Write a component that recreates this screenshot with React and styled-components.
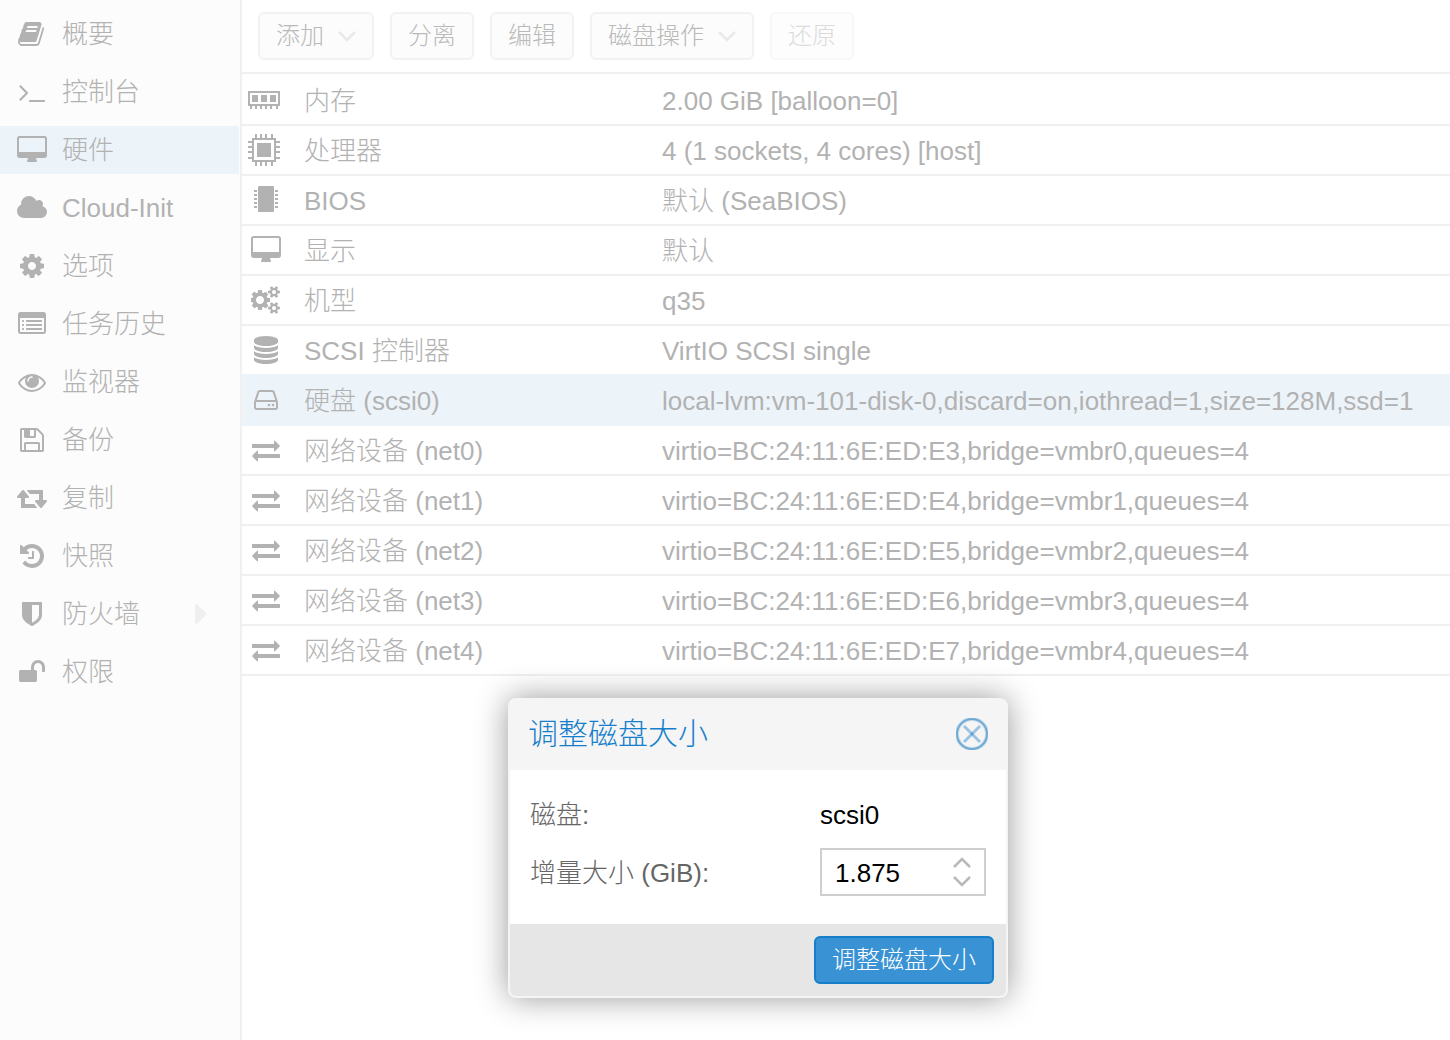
import React, { useState } from 'react';
import styled, { createGlobalStyle } from 'styled-components';

// Font Awesome 4 glyphs, 64 units per pixel at 28px
const glyphs = {
  book: {
    w: 1792,
    d: 'M1639 478q40 57 18 129l-275 906q-19 64-76.5 107.5t-122.5 43.5h-923q-77 0-148.5-53.5t-99.5-131.5q-24-67-2-127 0-4 3-27t4-37q1-8-3-21.5t-3-19.5q2-11 8-21t16.5-23.5 16.5-23.5q23-38 45-91.5t30-91.5q3-10 .5-30t-.5-28q3-11 17-28t17-23q21-36 42-92t25-90q1-9-2.5-32t.5-28q4-13 22-30.5t22-22.5q19-26 42.5-84.5t27.5-96.5q1-8-3-25.5t-2-26.5q2-8 9-18t18-23 17-21q8-12 16.5-30.5t15-35 16-36 19.5-32 26.5-23.5 36-11.5 47.5 5.5l-1 3q38-9 51-9h761q74 0 114 56t18 130l-274 906q-36 119-71.5 153.5t-128.5 34.5h-869q-27 0-38 15-11 16-1 43 24 70 144 70h923q29 0 56-15.5t35-41.5l300-987q7-22 5-57 38 15 59 43zm-1064 2q-4 13 2 22.5t20 9.5h608q13 0 25.5-9.5t16.5-22.5l21-64q4-13-2-22.5t-20-9.5h-608q-13 0-25.5 9.5t-16.5 22.5zm-83 256q-4 13 2 22.5t20 9.5h608q13 0 25.5-9.5t16.5-22.5l21-64q4-13-2-22.5t-20-9.5h-608q-13 0-25.5 9.5t-16.5 22.5z',
  },
  terminal: {
    w: 1792,
    d: 'M649 983l-466 466q-10 10-23 10t-23-10l-50-50q-10-10-10-23t10-23l393-393-393-393q-10-10-10-23t10-23l50-50q10-10 23-10t23 10l466 466q10 10 10 23t-10 23zm1079 457v64q0 14-9 23t-23 9h-960q-14 0-23-9t-9-23v-64q0-14 9-23t23-9h960q14 0 23 9t9 23z',
  },
  desktop: {
    w: 2048,
    d: 'M1856 992v-832q0-13-9.5-22.5t-22.5-9.5h-1600q-13 0-22.5 9.5t-9.5 22.5v832q0 13 9.5 22.5t22.5 9.5h1600q13 0 22.5-9.5t9.5-22.5zm128-832v1088q0 66-47 113t-113 47h-544q0 37 16 77.5t32 71 16 43.5q0 26-19 45t-45 19h-512q-26 0-45-19t-19-45q0-14 16-44t32-70 16-78h-544q-66 0-113-47t-47-113v-1088q0-66 47-113t113-47h1600q66 0 113 47t47 113z',
  },
  cloud: {
    w: 2048,
    d: 'M1984 1152q0 159-112.5 271.5t-271.5 112.5h-1088q-185 0-316.5-131.5t-131.5-316.5q0-132 71-241.5t187-163.5q-2-28-2-43 0-212 150-362t362-150q158 0 286.5 88t187.5 230q70-62 166-62 106 0 181 75t75 181q0 75-41 138 129 30 213 134.5t84 239.5z',
  },
  cog: {
    w: 1792,
    d: 'M1152 896q0-106-75-181t-181-75-181 75-75 181 75 181 181 75 181-75 75-181zm512-109v222q0 12-8 23t-20 13l-185 28q-19 54-39 91 35 50 107 138 10 12 10 25t-9 23q-27 37-99 108t-94 71q-12 0-26-9l-138-108q-44 23-91 38-16 136-29 186-7 28-36 28h-222q-14 0-24.5-8.5t-11.5-21.5l-28-184q-49-16-90-37l-141 107q-10 9-25 9-14 0-25-11-126-114-165-168-7-10-7-23 0-12 8-23 15-21 51-66.5t54-70.5q-27-50-41-99l-183-27q-13-2-21-12.5t-8-23.5v-222q0-12 8-23t19-13l186-28q14-46 39-92-40-57-107-138-10-12-10-24 0-10 9-23 26-36 98.5-107.5t94.5-71.5q13 0 26 10l138 107q44-23 91-38 16-136 29-186 7-28 36-28h222q14 0 24.5 8.5t11.5 21.5l28 184q49 16 90 37l142-107q9-9 24-9 13 0 25 10 129 119 165 170 7 8 7 22 0 12-8 23-15 21-51 66.5t-54 70.5q26 50 41 98l183 28q13 2 21 12.5t8 23.5z',
  },
  list: {
    w: 1792,
    d: 'M384 1184v64q0 13-9.5 22.5t-22.5 9.5h-64q-13 0-22.5-9.5t-9.5-22.5v-64q0-13 9.5-22.5t22.5-9.5h64q13 0 22.5 9.5t9.5 22.5zm0-256v64q0 13-9.5 22.5t-22.5 9.5h-64q-13 0-22.5-9.5t-9.5-22.5v-64q0-13 9.5-22.5t22.5-9.5h64q13 0 22.5 9.5t9.5 22.5zm0-256v64q0 13-9.5 22.5t-22.5 9.5h-64q-13 0-22.5-9.5t-9.5-22.5v-64q0-13 9.5-22.5t22.5-9.5h64q13 0 22.5 9.5t9.5 22.5zm1152 512v64q0 13-9.5 22.5t-22.5 9.5h-960q-13 0-22.5-9.5t-9.5-22.5v-64q0-13 9.5-22.5t22.5-9.5h960q13 0 22.5 9.5t9.5 22.5zm0-256v64q0 13-9.5 22.5t-22.5 9.5h-960q-13 0-22.5-9.5t-9.5-22.5v-64q0-13 9.5-22.5t22.5-9.5h960q13 0 22.5 9.5t9.5 22.5zm0-256v64q0 13-9.5 22.5t-22.5 9.5h-960q-13 0-22.5-9.5t-9.5-22.5v-64q0-13 9.5-22.5t22.5-9.5h960q13 0 22.5 9.5t9.5 22.5zm128 704v-832q0-13-9.5-22.5t-22.5-9.5h-1472q-13 0-22.5 9.5t-9.5 22.5v832q0 13 9.5 22.5t22.5 9.5h1472q13 0 22.5-9.5t9.5-22.5zm128-1088v1088q0 66-47 113t-113 47h-1472q-66 0-113-47t-47-113v-1088q0-66 47-113t113-47h1472q66 0 113 47t47 113z',
  },
  eye: {
    w: 1792,
    d: 'M1664 960q-152-236-381-353 61 104 61 225 0 185-131.5 316.5t-316.5 131.5-316.5-131.5-131.5-316.5q0-121 61-225-229 117-381 353 133 205 333.5 326.5t434.5 121.5 434.5-121.5 333.5-326.5zm-720-384q0-20-14-34t-34-14q-125 0-214.5 89.5t-89.5 214.5q0 20 14 34t34 14 34-14 14-34q0-86 61-147t147-61q20 0 34-14t14-34zm848 384q0 34-20 69-140 230-376.5 368.5t-499.5 138.5-499.5-139-376.5-368q-20-35-20-69t20-69q140-229 376.5-368t499.5-139 499.5 139 376.5 368q20 35 20 69z',
  },
  floppy: {
    w: 1792,
    d: 'M512 1536h768v-384h-768v384zm896 0h128v-896q0-14-10-38.5t-20-34.5l-281-281q-10-10-34-20t-39-10v416q0 40-28 68t-68 28h-576q-40 0-68-28t-28-68v-416h-128v1280h128v-416q0-40 28-68t68-28h832q40 0 68 28t28 68v416zm-384-928v-320q0-13-9.5-22.5t-22.5-9.5h-192q-13 0-22.5 9.5t-9.5 22.5v320q0 13 9.5 22.5t22.5 9.5h192q13 0 22.5-9.5t9.5-22.5zm640 32v928q0 40-28 68t-68 28h-1344q-40 0-68-28t-28-68v-1344q0-40 28-68t68-28h928q40 0 88 20t76 48l280 280q28 28 48 76t20 88z',
  },
  retweet: {
    w: 1920,
    d: 'M1280 1504q0 13-9.5 22.5t-22.5 9.5h-960q-8 0-13.5-2t-9-7-5.5-8-3-11.5-1-11.5v-600h-192q-26 0-45-19t-19-45q0-24 15-41l320-384q19-22 49-22t49 22l320 384q15 17 15 41 0 26-19 45t-45 19h-192v384h576q16 0 25 11l160 192q7 10 7 21zm640-416q0 24-15 41l-320 384q-20 23-49 23t-49-23l-320-384q-15-17-15-41 0-26 19-45t45-19h192v-384h-576q-16 0-25-12l-160-192q-7-9-7-20 0-13 9.5-22.5t22.5-9.5h960q8 0 13.5 2t9 7 5.5 8 3 11.5 1 11.5v600h192q26 0 45 19t19 45z',
  },
  history: {
    w: 1792,
    d: 'M1664 896q0 156-61 298t-164 245-245 164-298 61q-172 0-327-72.5t-264-204.5q-7-10-6.5-22.5t8.5-20.5l137-138q10-9 25-9 16 2 23 12 73 95 179 147t225 52q104 0 198.5-40.5t163.5-109.5 109.5-163.5 40.5-198.5-40.5-198.5-109.5-163.5-163.5-109.5-198.5-40.5q-98 0-188 35.5t-160 101.5l137 138q31 30 14 69-17 40-59 40h-448q-26 0-45-19t-19-45v-448q0-42 40-59 39-17 69 14l130 129q107-101 244.5-156.5t284.5-55.5q156 0 298 61t245 164 164 245 61 298zm-640-288v448q0 14-9 23t-23 9h-320q-14 0-23-9t-9-23v-64q0-14 9-23t23-9h224v-352q0-14 9-23t23-9h64q14 0 23 9t9 23z',
  },
  shield: {
    w: 1792,
    d: 'M1344 960v-640h-448v1137q119-63 213-137 235-184 235-360zm192-768v768q0 86-33.5 170.5t-83 150-118 127.5-126.5 103-121 77.5-89.5 49.5-42.5 20q-12 6-26 6t-26-6q-16-7-42.5-20t-89.5-49.5-121-77.5-126.5-103-118-127.5-83-150-33.5-170.5v-768q0-26 19-45t45-19h1152q26 0 45 19t19 45z',
  },
  unlock: {
    w: 1792,
    d: 'M1728 576v256q0 26-19 45t-45 19h-64q-26 0-45-19t-19-45v-256q0-106-75-181t-181-75-181 75-75 181v192h96q40 0 68 28t28 68v576q0 40-28 68t-68 28h-960q-40 0-68-28t-28-68v-576q0-40 28-68t68-28h672v-192q0-185 131.5-316.5t316.5-131.5 316.5 131.5 131.5 316.5z',
  },
  cogs: {
    w: 1920,
    d: 'M832 896q0-106-75-181t-181-75-181 75-75 181 75 181 181 75 181-75 75-181zm768 512q0-52-38-90t-90-38-90 38-38 90q0 53 37.5 90.5t90.5 37.5 90.5-37.5 37.5-90.5zm0-1024q0-52-38-90t-90-38-90 38-38 90q0 53 37.5 90.5t90.5 37.5 90.5-37.5 37.5-90.5zm-384 421v185q0 10-7 19.5t-16 10.5l-155 24q-11 35-32 76 34 48 90 115 7 11 7 20 0 12-7 19-23 30-82.5 89.5t-78.5 59.5q-11 0-21-7l-115-90q-37 19-77 31-11 108-23 155-7 24-30 24h-186q-11 0-20-7.5t-10-17.5l-23-153q-34-10-75-31l-118 89q-7 7-20 7-11 0-21-8-144-133-144-160 0-9 7-19 10-14 41-53t47-61q-23-44-35-82l-152-24q-10-1-17-9.5t-7-19.5v-185q0-10 7-19.5t16-10.5l155-24q11-35 32-76-34-48-90-115-7-11-7-20 0-12 7-20 22-30 82-89t79-59q11 0 21 7l115 90q34-18 77-32 11-108 23-154 7-24 30-24h186q11 0 20 7.5t10 17.5l23 153q34 10 75 31l118-89q8-7 20-7 11 0 21 8 144 133 144 160 0 8-7 19-12 16-42 54t-45 60q23 48 34 82l152 23q10 2 17 10.5t7 19.5zm640 533v140q0 16-149 31-12 27-30 52 51 113 51 138 0 4-4 7-122 71-124 71-8 0-46-47t-52-68q-20 2-30 2t-30-2q-14 21-52 68t-46 47q-2 0-124-71-4-3-4-7 0-25 51-138-18-25-30-52-149-15-149-31v-140q0-16 149-31 13-29 30-52-51-113-51-138 0-4 4-7 4-2 35-20t59-34 30-16q8 0 46 46.5t52 67.5q20-2 30-2t30 2q51-71 92-112l6-2q4 0 124 70 4 3 4 7 0 25-51 138 17 23 30 52 149 15 149 31zm0-1024v140q0 16-149 31-12 27-30 52 51 113 51 138 0 4-4 7-122 71-124 71-8 0-46-47t-52-68q-20 2-30 2t-30-2q-14 21-52 68t-46 47q-2 0-124-71-4-3-4-7 0-25 51-138-18-25-30-52-149-15-149-31v-140q0-16 149-31 13-29 30-52-51-113-51-138 0-4 4-7 4-2 35-20t59-34 30-16q8 0 46 46.5t52 67.5q20-2 30-2t30 2q51-71 92-112l6-2q4 0 124 70 4 3 4 7 0 25-51 138 17 23 30 52 149 15 149 31z',
  },
  database: {
    w: 1792,
    d: 'M896 768q237 0 443-43t325-127v170q0 69-103 128t-280 93.5-385 34.5-385-34.5-280-93.5-103-128v-170q119 84 325 127t443 43zm0 768q237 0 443-43t325-127v170q0 69-103 128t-280 93.5-385 34.5-385-34.5-280-93.5-103-128v-170q119 84 325 127t443 43zm0-384q237 0 443-43t325-127v170q0 69-103 128t-280 93.5-385 34.5-385-34.5-280-93.5-103-128v-170q119 84 325 127t443 43zm0-1152q208 0 385 34.5t280 93.5 103 128v128q0 69-103 128t-280 93.5-385 34.5-385-34.5-280-93.5-103-128v-128q0-69 103-128t280-93.5 385-34.5z',
  },
  hdd: {
    w: 1792,
    d: 'M1168 1216q0 33-23.5 56.5t-56.5 23.5-56.5-23.5-23.5-56.5 23.5-56.5 56.5-23.5 56.5 23.5 23.5 56.5zm256 0q0 33-23.5 56.5t-56.5 23.5-56.5-23.5-23.5-56.5 23.5-56.5 56.5-23.5 56.5 23.5 23.5 56.5zm112 160v-320q0-13-9.5-22.5t-22.5-9.5h-1216q-13 0-22.5 9.5t-9.5 22.5v320q0 13 9.5 22.5t22.5 9.5h1216q13 0 22.5-9.5t9.5-22.5zm-1230-480h1180l-157-482q-4-13-16-21.5t-26-8.5h-782q-14 0-26 8.5t-16 21.5zm1358 160v320q0 66-47 113t-113 47h-1216q-66 0-113-47t-47-113v-320q0-25 16-75l197-606q17-53 63-86t101-33h782q55 0 101 33t63 86l197 606q16 50 16 75z',
  },
  exchange: {
    w: 1792,
    d: 'M1792 1184v192q0 13-9.5 22.5t-22.5 9.5h-1376v192q0 13-9.5 22.5t-22.5 9.5q-12 0-24-10l-319-320q-9-9-9-22 0-14 9-23l320-320q9-9 23-9 13 0 22.5 9.5t9.5 22.5v192h1376q13 0 22.5 9.5t9.5 22.5zm0-544q0 14-9 23l-320 320q-9 9-23 9-13 0-22.5-9.5t-9.5-22.5v-192h-1376q-13 0-22.5-9.5t-9.5-22.5v-192q0-13 9.5-22.5t22.5-9.5h1376v-192q0-14 9-23t23-9q12 0 24 10l319 319q9 9 9 23z',
  },
};

const menu = [
  { icon: 'book', text: '概要' },
  { icon: 'terminal', text: '控制台' },
  { icon: 'desktop', text: '硬件' },
  { icon: 'cloud', text: 'Cloud-Init' },
  { icon: 'cog', text: '选项' },
  { icon: 'list', text: '任务历史' },
  { icon: 'eye', text: '监视器' },
  { icon: 'floppy', text: '备份' },
  { icon: 'retweet', text: '复制' },
  { icon: 'history', text: '快照' },
  { icon: 'shield', text: '防火墙', sub: true },
  { icon: 'unlock', text: '权限' },
];

const hardware = [
  { icon: 'memory', name: '内存', value: '2.00 GiB [balloon=0]' },
  { icon: 'cpu', name: '处理器', value: '4 (1 sockets, 4 cores) [host]' },
  { icon: 'bios', name: 'BIOS', value: '默认 (SeaBIOS)' },
  { icon: 'desktop', name: '显示', value: '默认' },
  { icon: 'cogs', name: '机型', value: 'q35' },
  { icon: 'database', name: 'SCSI 控制器', value: 'VirtIO SCSI single' },
  {
    icon: 'hdd',
    name: '硬盘 (scsi0)',
    value: 'local-lvm:vm-101-disk-0,discard=on,iothread=1,size=128M,ssd=1',
  },
  ...[0, 1, 2, 3, 4].map((n) => ({
    icon: 'exchange',
    name: `网络设备 (net${n})`,
    value: `virtio=BC:24:11:6E:ED:E${n + 3},bridge=vmbr${n},queues=4`,
  })),
];

function Glyph({ name }) {
  const { w, d } = glyphs[name];
  return (
    <svg width={w / 64} height="28" viewBox={`0 0 ${w} 1792`} aria-hidden="true">
      <path d={d} fill="currentColor" />
    </svg>
  );
}

function MemoryIcon() {
  const teeth = [2, 7, 12, 17, 22, 28];
  return (
    <svg width="36" height="32" viewBox="0 0 36 32" fill="currentColor" aria-hidden="true">
      <path
        fillRule="evenodd"
        d="M0 7h32v15H0zM2 9v11h28V9zM4 11h6v7H4zM13 11h6v7h-6zM22 11h6v7h-6z"
      />
      {teeth.map((t) => (
        <path key={t} d={`M${t} 22h2v3h-2z`} />
      ))}
    </svg>
  );
}

function CpuIcon() {
  const pins = [7, 12, 17, 23];
  return (
    <svg width="36" height="32" viewBox="0 0 36 32" fill="currentColor" aria-hidden="true">
      <path fillRule="evenodd" d="M4 4h24v24H4zM6 6v20h20V6zM9 9h14v14H9z" />
      {pins.map((p) => (
        <path key={p} d={`M${p} 0h2v4h-2zM${p} 28h2v4h-2zM0 ${p}h4v2H0zM28 ${p}h4v2h-4z`} />
      ))}
    </svg>
  );
}

function BiosIcon() {
  const pins = [6, 10, 14, 18, 22];
  return (
    <svg width="36" height="32" viewBox="0 0 36 32" fill="currentColor" aria-hidden="true">
      <rect x="10" y="2" width="16" height="26" rx="1" />
      {pins.map((p) => (
        <path key={p} d={`M6 ${p}h3v2H6zM27 ${p}h3v2h-3z`} />
      ))}
    </svg>
  );
}

const drawn = { memory: MemoryIcon, cpu: CpuIcon, bios: BiosIcon };

function Chevron({ up }) {
  return (
    <svg width="18" height="12" viewBox="0 0 18 12" fill="none" aria-hidden="true">
      <path
        d={up ? 'M1 10l8-8 8 8' : 'M1 2l8 8 8-8'}
        stroke="currentColor"
        strokeWidth="2.5"
      />
    </svg>
  );
}

function ResizeDialog({ onClose }) {
  const [size, setSize] = useState(1.875);

  return (
    <Dialog role="dialog" aria-labelledby="resize-title">
      <DialogHeader>
        <DialogTitle id="resize-title">调整磁盘大小</DialogTitle>
        <CloseButton type="button" aria-label="关闭" onClick={onClose}>
          <svg width="32" height="32" viewBox="0 0 32 32" fill="none" aria-hidden="true">
            <circle cx="16" cy="16" r="15" stroke="#c3dbed" strokeWidth="4" />
            <circle cx="16" cy="16" r="15" stroke="#72a9d0" strokeWidth="2" />
            <path d="M8 8l16 16M24 8L8 24" stroke="#9dc3e2" strokeWidth="3" />
            <path d="M15 15l2 2M17 15l-2 2" stroke="#5d9ed2" strokeWidth="2" />
          </svg>
        </CloseButton>
      </DialogHeader>
      <DialogBody>
        <Field>
          <FieldLabel as="span">磁盘:</FieldLabel>
          <FieldText>scsi0</FieldText>
        </Field>
        <Field>
          <FieldLabel htmlFor="increment">增量大小 (GiB):</FieldLabel>
          <Spinner>
            <SpinnerInput
              id="increment"
              value={size}
              onChange={(e) => setSize(e.target.value)}
            />
            <SpinnerArrows>
              <ArrowButton
                type="button"
                aria-label="增加"
                onClick={() => setSize(Number(size) + 1)}
              >
                <Chevron up />
              </ArrowButton>
              <ArrowButton
                type="button"
                aria-label="减少"
                onClick={() => setSize(Number(size) - 1)}
              >
                <Chevron />
              </ArrowButton>
            </SpinnerArrows>
          </Spinner>
        </Field>
      </DialogBody>
      <DialogFooter>
        <PrimaryButton type="button">调整磁盘大小</PrimaryButton>
      </DialogFooter>
    </Dialog>
  );
}

function App() {
  const [page, setPage] = useState(2);
  const [row, setRow] = useState(6);
  const [open, setOpen] = useState(true);

  return (
    <Layout>
      <GlobalStyle />
      <Sidebar>
        {menu.map((item, i) => (
          <MenuLink
            key={item.icon}
            href="#"
            $active={page === i}
            onClick={() => setPage(i)}
          >
            <IconBox>
              <Glyph name={item.icon} />
            </IconBox>
            <MenuText>{item.text}</MenuText>
            {item.sub && (
              <SubArrow width="12" height="20" viewBox="0 0 12 20" aria-hidden="true">
                <path d="M0 1q1-2 3 0l8 8q1 1 0 2l-8 8q-2 2-3 0z" fill="currentColor" />
              </SubArrow>
            )}
          </MenuLink>
        ))}
      </Sidebar>
      <Content>
        <Toolbar>
          <ToolButton type="button">
            添加
            <Chevron />
          </ToolButton>
          <ToolButton type="button">分离</ToolButton>
          <ToolButton type="button" onClick={() => setOpen(true)}>
            编辑
          </ToolButton>
          <ToolButton type="button">
            磁盘操作
            <Chevron />
          </ToolButton>
          <ToolButton type="button" disabled>
            还原
          </ToolButton>
        </Toolbar>
        <Table>
          <tbody>
            {hardware.map((item, i) => {
              const Drawn = drawn[item.icon];
              return (
                <Row
                  key={item.name}
                  $active={row === i}
                  $beforeActive={row === i + 1}
                  onClick={() => setRow(i)}
                >
                  <NameCell>
                    <NameWrap>
                      <IconBox>{Drawn ? <Drawn /> : <Glyph name={item.icon} />}</IconBox>
                      <CellText>{item.name}</CellText>
                    </NameWrap>
                  </NameCell>
                  <ValueCell>
                    <CellText>{item.value}</CellText>
                  </ValueCell>
                </Row>
              );
            })}
          </tbody>
        </Table>
      </Content>
      {open && <ResizeDialog onClose={() => setOpen(false)} />}
    </Layout>
  );
}
export default App;

const GlobalStyle = createGlobalStyle`
  * {
    box-sizing: border-box;
  }
  body {
    margin: 0;
    background: #fff;
  }
  body, button, input {
    font-family: 'Liberation Sans', 'Noto Sans CJK SC', sans-serif;
    font-weight: 300;
  }
`;

const Layout = styled.div`
  position: relative;
  display: flex;
  min-height: 100vh;
  color: #b2b2b2;
  font-size: 26px;
  line-height: 48px;
`;

const Sidebar = styled.nav`
  flex: 0 0 242px;
  display: flex;
  flex-direction: column;
  gap: 10px;
  padding: 10px 1px 10px 0;
  background: #fcfcfc;
  border-right: 2px solid #f0f0f0;
`;

const MenuLink = styled.a`
  display: flex;
  align-items: center;
  height: 48px;
  padding: 0 32px 0 14px;
  color: inherit;
  text-decoration: none;
  background: ${(props) => (props.$active ? '#ecf4fa' : 'transparent')};
`;

const IconBox = styled.span`
  flex: none;
  display: flex;
  justify-content: center;
  width: 36px;
`;

const MenuText = styled.span`
  flex: 1;
  margin-left: 12px;
`;

const SubArrow = styled.svg`
  color: #efefef;
`;

const Content = styled.main`
  flex: 1;
  min-width: 0;
`;

const Toolbar = styled.div`
  display: flex;
  gap: 16px;
  padding: 12px 16px;
  border-bottom: 2px solid #f0f0f0;
`;

const ToolButton = styled.button`
  display: flex;
  align-items: center;
  gap: 14px;
  height: 48px;
  padding: 0 16px;
  color: #b9b9b9;
  font-size: 24px;
  line-height: 44px;
  background: #fcfcfc;
  border: 2px solid #f2f2f2;
  border-radius: 6px;
  opacity: ${(props) => (props.disabled ? 0.5 : 1)};
  & > svg {
    color: #e9e9e9;
  }
`;

const Table = styled.table`
  width: 100%;
  margin-top: 2px;
  border-spacing: 0;
`;

// the selection colour also covers the line above the selected row
const Row = styled.tr`
  background: ${(props) => (props.$active ? '#ecf4fa' : 'transparent')};
  & > td {
    border-bottom: 2px solid
      ${(props) => (props.$active || props.$beforeActive ? '#ecf4fa' : '#f0f0f0')};
  }
`;

const NameCell = styled.td`
  width: 410px;
  padding: 0 0 0 6px;
`;

const NameWrap = styled.div`
  display: flex;
  align-items: center;
  gap: 20px;
  height: 48px;
`;

const ValueCell = styled.td`
  padding: 0 10px;
  white-space: nowrap;
`;

const CellText = styled.span`
  display: block;
  padding-top: 2px;
  line-height: 46px;
`;

const Dialog = styled.section`
  position: absolute;
  top: 698px;
  left: 508px;
  width: 500px;
  color: #666;
  background: #fff;
  border: 2px solid #f5f5f5;
  border-radius: 8px;
  box-shadow: 0 0 32px #999;
  overflow: hidden;
`;

const DialogHeader = styled.header`
  display: flex;
  align-items: center;
  justify-content: space-between;
  height: 70px;
  padding: 0 18px 2px;
  background: #f5f5f5;
`;

const DialogTitle = styled.h2`
  margin: 0;
  color: #157fcc;
  font-size: 30px;
  font-weight: 300;
`;

const CloseButton = styled.button`
  display: flex;
  padding: 0;
  background: none;
  border: 0;
`;

const DialogBody = styled.div`
  display: flex;
  flex-direction: column;
  gap: 10px;
  padding: 20px 20px 28px;
`;

const Field = styled.div`
  display: flex;
  align-items: center;
  height: 48px;
`;

const FieldLabel = styled.label`
  flex: 0 0 290px;
  padding-top: 2px;
`;

const FieldText = styled.span`
  padding-top: 2px;
  color: #000;
`;

const Spinner = styled.div`
  flex: 1;
  display: flex;
  min-width: 0;
  height: 48px;
  border: 2px solid #cfcfcf;
`;

const SpinnerInput = styled.input`
  flex: 1;
  min-width: 0;
  padding: 2px 0 0 13px;
  color: #000;
  font-size: 26px;
  background: none;
  border: 0;
  outline: none;
`;

const SpinnerArrows = styled.div`
  display: flex;
  flex-direction: column;
  justify-content: center;
  gap: 6px;
  width: 44px;
  color: #b9b9b9;
`;

const ArrowButton = styled.button`
  display: flex;
  justify-content: center;
  padding: 0;
  color: inherit;
  background: none;
  border: 0;
`;

const DialogFooter = styled.footer`
  display: flex;
  justify-content: flex-end;
  padding: 12px;
  background: #e6e6e6;
`;

const PrimaryButton = styled.button`
  height: 48px;
  padding: 0 16px;
  color: #fff;
  font-size: 24px;
  line-height: 44px;
  background: #3892d4;
  border: 2px solid #157fcc;
  border-radius: 6px;
`;
